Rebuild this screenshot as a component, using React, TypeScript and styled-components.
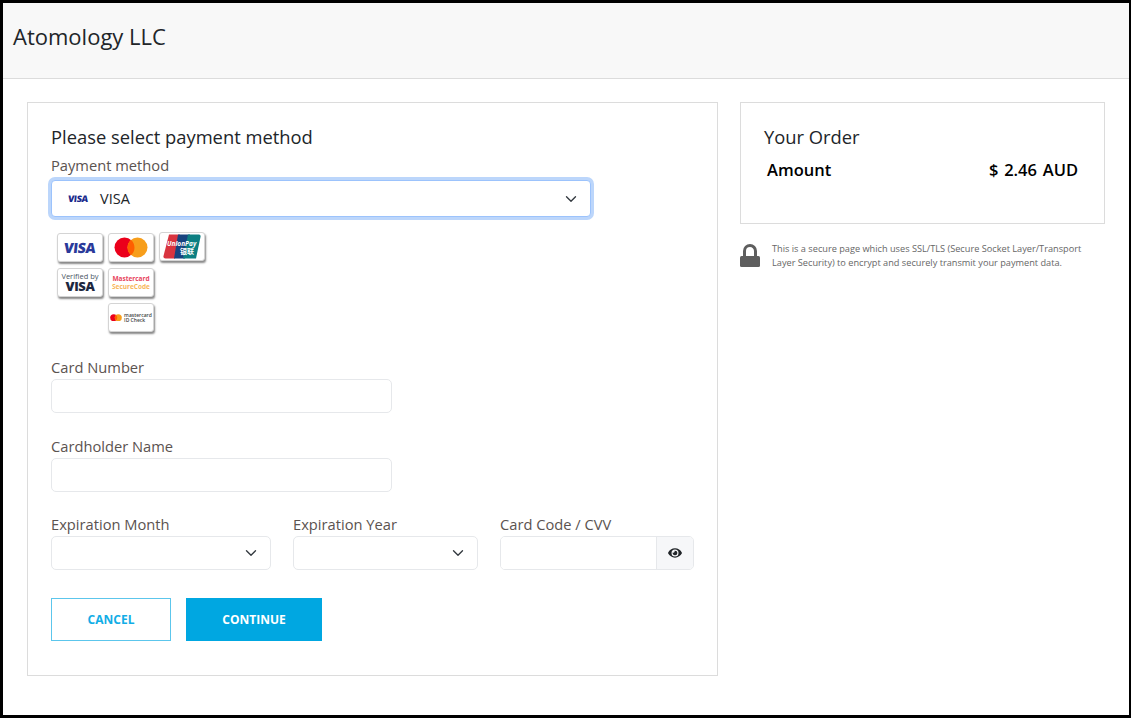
import { FaEye } from "react-icons/fa";
import styled, { createGlobalStyle } from "styled-components";

const GlobalStyle = createGlobalStyle`
  html, body {
    margin: 0;
    padding: 0;
    background: #000;
  }
  * {
    box-sizing: border-box;
  }
`;

const Frame = styled.div`
  width: 1131px;
  height: 718px;
  border: 3px solid #000;
  border-right-width: 2px;
  background: #fff;
  font-family: "Open Sans", "Liberation Sans", sans-serif;
  overflow: hidden;
`;

const Header = styled.header`
  height: 76px;
  padding: 17px 10px 0;
  background: #f8f8f8;
  border-bottom: 1px solid #dcdcdc;
`;

const Merchant = styled.h1`
  margin: 0;
  font-size: 22px;
  line-height: 33px;
  font-weight: 400;
  color: #212529;
`;

const Main = styled.main`
  display: flex;
  align-items: flex-start;
  gap: 22px;
  padding: 23px 0 0 24px;
`;

const Card = styled.section`
  width: 691px;
  height: 574px;
  padding: 22px 23px 0;
  border: 1px solid #dcdcdc;
`;

const Heading = styled.h2`
  margin: 0;
  font-size: 18.35px;
  line-height: 24px;
  font-weight: 400;
  color: #212529;
`;

const Label = styled.label`
  display: block;
  font-size: 14.7px;
  line-height: 20px;
  color: #5b5350;
`;

const MethodLabel = styled(Label)`
  margin-top: 6px;
  margin-bottom: 5px;
`;

const MethodSelect = styled.div`
  display: flex;
  align-items: center;
  width: 540px;
  height: 37px;
  padding: 0 13px 0 12px;
  border: 1px solid #9cc3fc;
  border-radius: 4px;
  box-shadow: 0 0 0 3px #bcd6fb;
  background: #fff;
  font-size: 14.5px;
  color: #212529;
`;

const MethodLogo = styled.span`
  width: 28px;
  margin-right: 8px;
  text-align: center;
  font-size: 9px;
  font-weight: 800;
  letter-spacing: -0.3px;
  color: #1a2a8c;
  transform: skewX(-6deg);
`;

const MethodName = styled.span`
  flex: 1;
`;

const Chevron = () => (
  <svg width="12" height="12" viewBox="0 0 16 16" fill="none">
    <path d="M2 5l6 6 6-6" stroke="#343a40" strokeWidth="1.8" strokeLinecap="round" strokeLinejoin="round" />
  </svg>
);

const LogoGrid = styled.div`
  display: grid;
  grid-template-columns: repeat(3, 46px);
  grid-auto-rows: 29px;
  gap: 6px 5px;
  margin: 16px 0 0 6px;
`;

const LogoTile = styled.div<{ $col?: number; $raise?: boolean }>`
  grid-column: ${(p) => p.$col ?? "auto"};
  position: relative;
  top: ${(p) => (p.$raise ? "-1px" : "0")};
  display: flex;
  align-items: center;
  justify-content: center;
  background: #fff;
  border: 1px solid #d4d4d4;
  border-radius: 3px;
  box-shadow: 1px 2px 2px #888;
  overflow: hidden;
`;

const VisaMark = styled.span`
  font-size: 14px;
  line-height: 1;
  font-weight: 800;
  letter-spacing: -0.4px;
  color: #2a3a9a;
  transform: skewX(-6deg);
`;

const SecureTile = styled(LogoTile)`
  flex-direction: column;
  font-size: 6.5px;
  line-height: 8px;
  font-weight: 700;
`;

const SecureTop = styled.span`
  color: #e8455e;
`;

const SecureBottom = styled.span`
  color: #f8b65a;
`;

const IdTile = styled(LogoTile)`
  gap: 2px;
`;

const IdText = styled.span`
  font-size: 5px;
  line-height: 5px;
  font-weight: 600;
  color: #444;
`;

const MastercardLogo = ({ width }: { width: number }) => (
  <svg width={width} height={width * 0.62} viewBox="0 0 34 21">
    <circle cx="10.5" cy="10.5" r="10" fill="#eb001b" />
    <circle cx="23.5" cy="10.5" r="10" fill="#f79e1b" />
    <path d="M17 2.9a10 10 0 0 1 0 15.2a10 10 0 0 1 0-15.2z" fill="#ff5f00" />
  </svg>
);

const UnionPayLogo = () => (
  <svg width="38" height="25" viewBox="0 0 38 25">
    <path d="M6 0.5h11l-5 24H2.5Q0 24.5 0.5 22z" fill="#d9343f" />
    <path d="M15 0.5h12l-5 24H11z" fill="#17437f" />
    <path d="M25 0.5h11q2 0 1.5 2.5L33 24.5H20z" fill="#0c7f82" />
    <text x="4" y="11.5" fontSize="6.5" fontWeight="700" fontStyle="italic" fill="#fff" fontFamily="Open Sans">UnionPay</text>
    <text x="17" y="20" fontSize="7" fontWeight="700" fill="#fff" fontFamily="Noto Sans CJK SC">银联</text>
  </svg>
);

const VerifiedVisaLogo = () => (
  <svg width="44" height="27" viewBox="0 0 44 27" fontFamily="Open Sans">
    <text x="22" y="10" fontSize="7.5" textAnchor="middle" fill="#4a5563">Verified by</text>
    <text x="22" y="22" fontSize="13" fontWeight="800" letterSpacing="-0.4" textAnchor="middle" fill="#1d2740">VISA</text>
  </svg>
);

const Field = styled.div<{ $top: number }>`
  margin-top: ${(p) => p.$top}px;
`;

const FieldLabel = styled(Label)`
  margin-bottom: 2px;
`;

const TextInput = styled.input`
  display: block;
  width: 341px;
  height: 34px;
  border: 1px solid #e6e8eb;
  border-radius: 5px;
  background: #fff;
  outline: none;
`;

const Row = styled.div`
  display: flex;
  gap: 22px;
  margin-top: 22px;
`;

const SelectBox = styled.div<{ $width: number }>`
  display: flex;
  align-items: center;
  justify-content: flex-end;
  width: ${(p) => p.$width}px;
  height: 34px;
  padding-right: 13px;
  border: 1px solid #e6e8eb;
  border-radius: 5px;
`;

const CodeGroup = styled.div`
  display: flex;
  width: 194px;
  height: 34px;
  border: 1px solid #e6e8eb;
  border-radius: 5px;
  overflow: hidden;
`;

const CodeInput = styled.input`
  flex: 1;
  min-width: 0;
  border: 0;
  outline: none;
  background: #fff;
`;

const EyeAddon = styled.span`
  display: flex;
  align-items: center;
  justify-content: center;
  width: 37px;
  border-left: 1px solid #e6e8eb;
  background: #f6f7f9;
  color: #212529;
  font-size: 14px;
`;

const Actions = styled.div`
  display: flex;
  gap: 15px;
  margin-top: 28px;
`;

const Button = styled.button<{ $primary?: boolean; $width: number }>`
  width: ${(p) => p.$width}px;
  height: 43px;
  padding: 0 0 1px;
  border: 1px solid ${(p) => (p.$primary ? "#00a7e1" : "#5cc6ec")};
  background: ${(p) => (p.$primary ? "#00a7e1" : "#fff")};
  color: ${(p) => (p.$primary ? "#fff" : "#12ade6")};
  font-family: inherit;
  font-size: 12px;
  font-weight: 700;
`;

const Side = styled.aside`
  width: 365px;
`;

const OrderCard = styled.section`
  height: 122px;
  padding: 22px 26px 0 23px;
  border: 1px solid #dcdcdc;
`;

const OrderLine = styled.div`
  display: flex;
  justify-content: space-between;
  margin: 10px 0 0 3px;
  font-size: 16.5px;
  line-height: 22px;
  font-weight: 600;
  color: #000;
`;

const OrderValue = styled.span`
  word-spacing: 1.5px;
`;

const SecureNote = styled.div`
  display: flex;
  align-items: center;
  gap: 12px;
  margin-top: 18px;
`;

const NoteText = styled.p`
  margin: 0;
  font-size: 9.2px;
  line-height: 14px;
  color: #666;
`;

const LockIcon = () => (
  <svg width="20" height="24" viewBox="0 0 20 24" style={{ flex: "none" }}>
    <path d="M4.5 13V7a5.5 5.5 0 0 1 11 0v6" fill="none" stroke="#5e5e5e" strokeWidth="3" />
    <rect x="0" y="12" width="20" height="11" rx="1.5" fill="#5e5e5e" />
  </svg>
);

export default function App() {
  return (
    <Frame>
      <GlobalStyle />
      <Header>
        <Merchant>Atomology LLC</Merchant>
      </Header>
      <Main>
        <Card>
          <Heading>Please select payment method</Heading>
          <MethodLabel>Payment method</MethodLabel>
          <MethodSelect>
            <MethodLogo>VISA</MethodLogo>
            <MethodName>VISA</MethodName>
            <Chevron />
          </MethodSelect>
          <LogoGrid>
            <LogoTile>
              <VisaMark>VISA</VisaMark>
            </LogoTile>
            <LogoTile>
              <MastercardLogo width={34} />
            </LogoTile>
            <LogoTile $raise>
              <UnionPayLogo />
            </LogoTile>
            <LogoTile>
              <VerifiedVisaLogo />
            </LogoTile>
            <SecureTile>
              <SecureTop>Mastercard</SecureTop>
              <SecureBottom>SecureCode</SecureBottom>
            </SecureTile>
            <IdTile $col={2}>
              <MastercardLogo width={12} />
              <IdText>
                mastercard
                <br />
                ID Check
              </IdText>
            </IdTile>
          </LogoGrid>
          <Field $top={25}>
            <FieldLabel>Card Number</FieldLabel>
            <TextInput />
          </Field>
          <Field $top={23}>
            <FieldLabel>Cardholder Name</FieldLabel>
            <TextInput />
          </Field>
          <Row>
            <div>
              <FieldLabel>Expiration Month</FieldLabel>
              <SelectBox $width={220}>
                <Chevron />
              </SelectBox>
            </div>
            <div>
              <FieldLabel>Expiration Year</FieldLabel>
              <SelectBox $width={185}>
                <Chevron />
              </SelectBox>
            </div>
            <div>
              <FieldLabel>Card Code / CVV</FieldLabel>
              <CodeGroup>
                <CodeInput />
                <EyeAddon>
                  <FaEye />
                </EyeAddon>
              </CodeGroup>
            </div>
          </Row>
          <Actions>
            <Button $width={120}>CANCEL</Button>
            <Button $primary $width={136}>
              CONTINUE
            </Button>
          </Actions>
        </Card>
        <Side>
          <OrderCard>
            <Heading>Your Order</Heading>
            <OrderLine>
              <span>Amount</span>
              <OrderValue>$ 2.46 AUD</OrderValue>
            </OrderLine>
          </OrderCard>
          <SecureNote>
            <LockIcon />
            <NoteText>
              This is a secure page which uses SSL/TLS (Secure Socket Layer/Transport
              <br />
              Layer Security) to encrypt and securely transmit your payment data.
            </NoteText>
          </SecureNote>
        </Side>
      </Main>
    </Frame>
  );
}
